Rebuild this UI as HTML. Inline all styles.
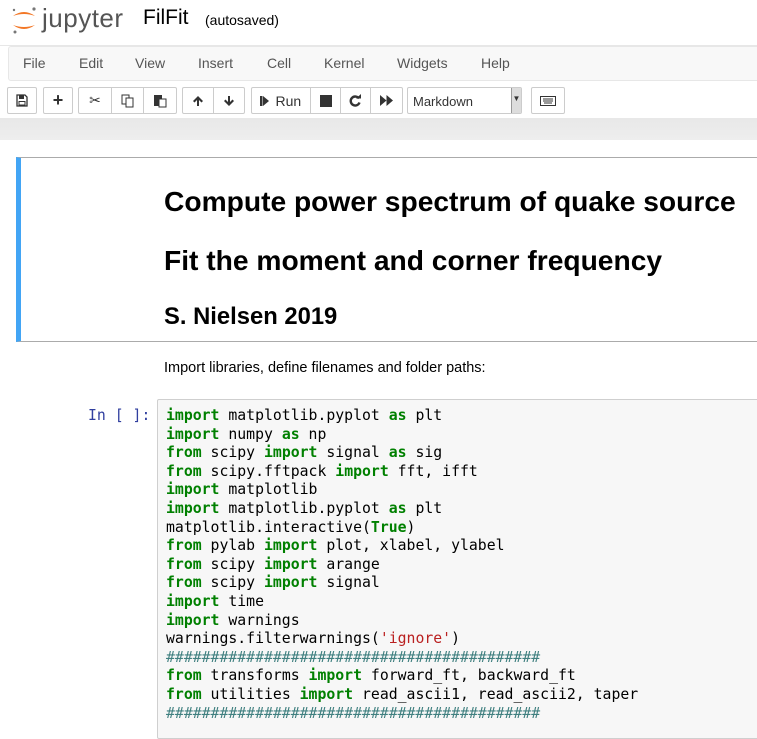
<!DOCTYPE html>
<html><head><meta charset="utf-8"><style>
*{box-sizing:border-box;margin:0;padding:0}
body{width:757px;height:722px;overflow:hidden;background:#fff;font-family:"Liberation Sans",sans-serif;position:relative}
.abs{position:absolute}
.menu{left:8px;top:46px;width:760px;height:35px;background:#f8f8f8;border:1px solid #e7e7e7;border-radius:3px}
.menu span{position:absolute;top:8px;font-size:14px;color:#555}
.btn{position:absolute;top:87px;height:27px;border:1px solid #ccc;border-radius:2px;background:#fff;display:flex;align-items:center;justify-content:center;font-size:13px;color:#333}
.grp{position:absolute;top:87px;height:27px;border:1px solid #ccc;border-radius:2px;display:flex}
.grp div{border-right:1px solid #ccc;display:flex;align-items:center;justify-content:center;height:100%;font-size:14px;color:#333}
.grp div:last-child{border-right:none}
pre{font-family:"DejaVu Sans Mono",monospace;font-size:14.8px;line-height:18.6px;color:#000}
.k{color:#008000;font-weight:bold}
.s{color:#ba2121}
.h{color:#408080}
</style></head><body>
<svg class="abs" style="left:10px;top:5px" width="28" height="30" viewBox="0 0 28 30">
<path d="M3 11 Q14 3 25 11 Q14 7 3 11Z" fill="#f37726"/>
<path d="M3 20 Q14 28 25 20 Q14 24 3 20Z" fill="#f37726"/>
<circle cx="24" cy="4" r="1.6" fill="#777"/><circle cx="4" cy="5" r="1.2" fill="#777"/><circle cx="5" cy="27" r="1.5" fill="#777"/>
</svg>
<div class="abs" style="left:42px;top:3px;font-size:26px;color:#555;letter-spacing:0.5px">jupyter</div>
<div class="abs" style="left:143px;top:6px;font-size:21px;color:#000">FilFit</div>
<div class="abs" style="left:205px;top:12px;font-size:14px;color:#000">(autosaved)</div>
<div class="abs" style="left:0;top:45px;width:757px;height:1px;background:#e7e7e7"></div>
<div class="abs menu">
<span style="left:14px">File</span><span style="left:70px">Edit</span><span style="left:126px">View</span><span style="left:189px">Insert</span><span style="left:258px">Cell</span><span style="left:315px">Kernel</span><span style="left:388px">Widgets</span><span style="left:472px">Help</span>
</div>
<div class="btn" style="left:7px;width:30px"><svg width="12" height="13" viewBox="0 0 12 13"><path d="M1 1h8l2 2v9H1z" fill="none" stroke="#333" stroke-width="1.3"/><rect x="3" y="1.5" width="5" height="3.5" fill="#333"/><rect x="3" y="7.5" width="6" height="3.5" fill="none" stroke="#333"/></svg></div>
<div class="btn" style="left:43px;width:30px;font-size:18px;font-weight:bold">+</div>
<div class="grp" style="left:78px;width:99px"><div style="width:33px">✂</div><div style="width:32px"><svg width="14" height="14"><rect x="1" y="1" width="7" height="9" fill="#fff" stroke="#333"/><rect x="5" y="4" width="7" height="9" fill="#fff" stroke="#333"/></svg></div><div style="width:32px"><svg width="14" height="14"><rect x="1" y="1" width="8" height="11" fill="#333"/><rect x="6" y="5" width="7" height="8" fill="#fff" stroke="#333"/></svg></div></div>
<div class="grp" style="left:182px;width:63px"><div style="width:31px"><svg width="12" height="12" viewBox="0 0 12 12"><path d="M6 1L1 6l1.5 1.5L5 5v6h2V5l2.5 2.5L11 6z" fill="#333"/></svg></div><div style="width:31px"><svg width="12" height="12" viewBox="0 0 12 12"><path d="M6 11L1 6l1.5-1.5L5 7V1h2v6l2.5-2.5L11 6z" fill="#333"/></svg></div></div>
<div class="grp" style="left:251px;width:152px"><div style="width:59px;font-size:14px"><svg width="10" height="12" style="margin-right:5px"><rect x="0" y="1" width="2.5" height="10" fill="#333"/><path d="M3 1l6 5-6 5z" fill="#333"/></svg>Run</div><div style="width:31px"><svg width="12" height="12"><rect width="12" height="12" fill="#333"/></svg></div><div style="width:30px"><svg width="13" height="13" viewBox="0 0 13 13"><path d="M10 4.5A4.5 4.5 0 1 0 10.5 8.5" fill="none" stroke="#333" stroke-width="2.4"/><path d="M7 4.5h5V0z" fill="#333"/></svg></div><div style="width:31px"><svg width="13" height="11"><path d="M0 0l6.5 5.5L0 11zM6.5 0l6.5 5.5L6.5 11z" fill="#333"/></svg></div></div>
<div class="abs" style="left:407px;top:87px;width:115px;height:27px;border:1px solid #ccc;border-radius:2px;background:#fff;font-size:13px;color:#333;padding:6px 0 0 5px">Markdown<div class="abs" style="right:0;top:0;width:10px;height:25px;background:#ddd;border-left:1px solid #999;font-size:8px;padding-top:6px;text-align:center">▼</div></div>
<div class="btn" style="left:531px;width:34px"><svg width="16" height="10"><rect x="0.5" y="0.5" width="15" height="9" fill="none" stroke="#333"/><path d="M3 3h10M3 5h10M4 7h8" stroke="#333"/></svg></div>
<div class="abs" style="left:0;top:118px;width:757px;height:22px;background:linear-gradient(#e8e8e8,#eee)"></div>
<div class="abs" style="left:16px;top:157px;width:760px;height:185px;border:1px solid #ababab;border-left:5px solid #42a5f5"></div>
<div class="abs" style="left:164px;top:185px;font-size:28.2px;font-weight:bold;color:#000">Compute power spectrum of quake source</div>
<div class="abs" style="left:164px;top:244px;font-size:28.2px;font-weight:bold;color:#000">Fit the moment and corner frequency</div>
<div class="abs" style="left:164px;top:303px;font-size:23.8px;font-weight:bold;color:#000">S. Nielsen 2019</div>
<div class="abs" style="left:164px;top:360px;font-size:14.5px;color:#000">Import libraries, define filenames and folder paths:</div>
<div class="abs" style="left:88px;top:407px;font-family:'DejaVu Sans Mono',monospace;font-size:14.8px;color:#303f9f">In&nbsp;[&nbsp;]:</div>
<div class="abs" style="left:157px;top:399px;width:620px;height:340px;background:#f7f7f7;border:1px solid #cfcfcf;border-radius:2px"></div>
<pre class="abs" style="left:166px;top:407px"><span class="k">import</span> matplotlib.pyplot <span class="k">as</span> plt
<span class="k">import</span> numpy <span class="k">as</span> np
<span class="k">from</span> scipy <span class="k">import</span> signal <span class="k">as</span> sig
<span class="k">from</span> scipy.fftpack <span class="k">import</span> fft, ifft
<span class="k">import</span> matplotlib
<span class="k">import</span> matplotlib.pyplot <span class="k">as</span> plt
matplotlib.interactive(<span class="k">True</span>)
<span class="k">from</span> pylab <span class="k">import</span> plot, xlabel, ylabel
<span class="k">from</span> scipy <span class="k">import</span> arange
<span class="k">from</span> scipy <span class="k">import</span> signal
<span class="k">import</span> time
<span class="k">import</span> warnings
warnings.filterwarnings(<span class="s">'ignore'</span>)
<span class="h">##########################################</span>
<span class="k">from</span> transforms <span class="k">import</span> forward_ft, backward_ft
<span class="k">from</span> utilities <span class="k">import</span> read_ascii1, read_ascii2, taper
<span class="h">##########################################</span></pre>
</body></html>
